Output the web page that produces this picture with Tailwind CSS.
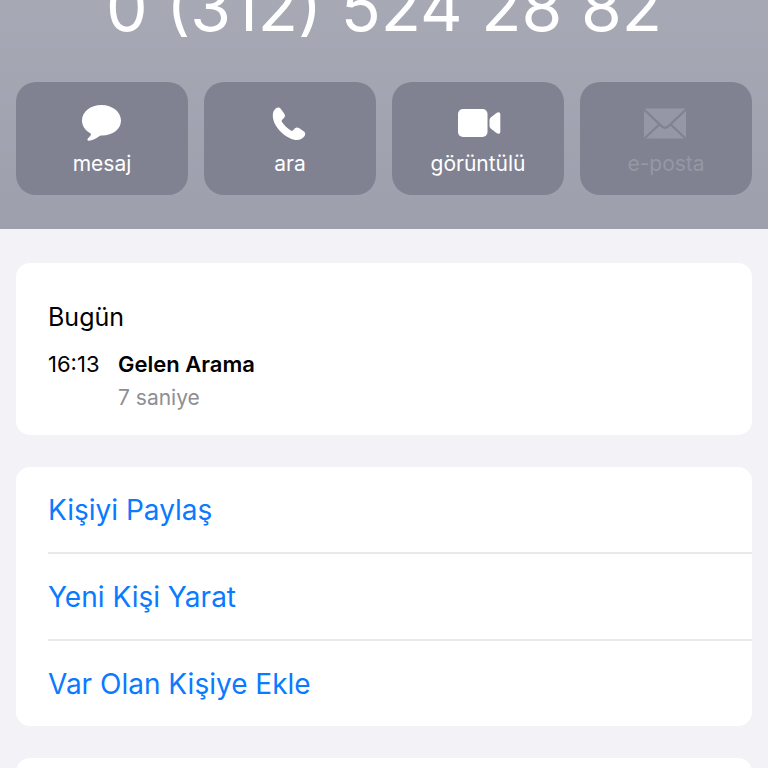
<!DOCTYPE html>
<html lang="tr">
<head>
<meta charset="utf-8">
<meta name="viewport" content="width=device-width, initial-scale=1">
<title>0 (312) 524 28 82</title>
<script src="https://cdn.jsdelivr.net/npm/@tailwindcss/browser@4"></script>
</head>
<body class="h-screen overflow-hidden bg-[#f2f2f7] font-['Inter',sans-serif] text-black">
<header class="bg-linear-to-b from-[#a8aab6] to-[#9e9fac] px-4 pb-[34px]">
  <h1 class="-mt-[33px] mb-[35px] text-center text-[66px] leading-[80px] whitespace-nowrap text-white">0 (312) 524 28 82</h1>
  <nav class="grid grid-cols-4 gap-4 text-[21px] leading-6 text-white">
    <button class="flex flex-col items-center gap-2 rounded-[20px] bg-[#808292] pt-5 pb-[19px]">
      <svg class="h-[42px] w-12" viewBox="0 0 48 42" fill="currentColor" aria-hidden="true"><path d="M23.500 3C12.500 3 4 9.800 4 18.500c0 5.300 3 9.900 8.300 12.700.9.500 1 1 .5 1.800-.7 1.200-1.700 2.100-2.700 3.200-1.300 1.400-.8 2.600 1 2.500 4.300-.4 7.600-2.500 10.500-4.600.8-.4 1.300-.5 2.400-.5C34.800 33.400 43 27 43 18.500S34.500 3 23.500 3Z"/></svg>
      <span>mesaj</span>
    </button>
    <button class="flex flex-col items-center gap-2 rounded-[20px] bg-[#808292] pt-5 pb-[19px]">
      <svg class="h-[42px] w-12" viewBox="1 0 48 42" fill="currentColor" aria-hidden="true"><path d="M10.700 6.600c1.600-1.400 3.700-1.500 5 .2l3.600 5c1.100 1.600.9 3-.4 4.300l-1.600 1.700c-.8.800-.8 1.400-.3 2.300 1.800 3 5.700 6.700 8.800 8.400.9.500 1.600.4 2.300-.3l1.600-1.600c1.300-1.300 2.800-1.500 4.300-.5l5 3.400c1.600 1.200 1.600 3 .4 4.700-2.300 3.300-6.300 4.500-11 3.200C18.300 34.600 7.800 23.600 7.800 13.400c0-2.800.9-5 2.900-6.800Z"/></svg>
      <span>ara</span>
    </button>
    <button class="flex flex-col items-center gap-2 rounded-[20px] bg-[#808292] pt-5 pb-[19px]">
      <svg class="h-[42px] w-12" viewBox="0 0 48 42" fill="currentColor" aria-hidden="true"><rect x="4" y="7" width="29.500" height="28" rx="5"/><path d="M35.500 18.500c0-1.400.4-2.300 1.500-3.300l5.500-4.300c1.800-1.400 3.800-.8 3.800 1.300v17.600c0 2.100-2 2.700-3.800 1.300L37 26.800c-1.100-1-1.500-1.900-1.500-3.300Z"/></svg>
      <span>görüntülü</span>
    </button>
    <button disabled class="flex flex-col items-center gap-2 rounded-[20px] bg-[#808292] pt-5 pb-[19px] text-[#9597a4]">
      <svg class="h-[42px] w-12" viewBox="1 0 48 42" aria-hidden="true"><rect x="3" y="6.500" width="42" height="30" rx="2" fill="currentColor"/><path d="m3 7.500 17.800 16.900c2.300 2 4.100 2 6.400 0L45 7.500M4 36l14.800-14M44 36 29.200 22" fill="none" stroke="#808292" stroke-width="2.200"/></svg>
      <span>e-posta</span>
    </button>
  </nav>
</header>
<main class="flex flex-col gap-8 px-4 pt-[34px]">
  <section class="rounded-[14px] bg-white px-8 pt-[39px] pb-5">
    <h2 class="text-[25px] leading-[30px]">Bugün</h2>
    <div class="mt-[15px] grid grid-cols-[70px_1fr] text-[22px] leading-[34px]">
      <time>16:13</time>
      <p class="font-semibold">Gelen Arama</p>
      <p class="col-start-2 text-[21px] text-[#8e8e93]">7 saniye</p>
    </div>
  </section>
  <section class="rounded-[14px] bg-white pl-8 text-[28px] leading-10 text-[#0a7aff]">
    <button class="block w-full border-b-2 border-[#e9e9eb] pt-[23px] pb-[22px] text-left">Kişiyi Paylaş</button>
    <button class="block w-full border-b-2 border-[#e9e9eb] pt-[23px] pb-[22px] text-left">Yeni Kişi Yarat</button>
    <button class="block w-full pt-[23px] pb-[22px] text-left">Var Olan Kişiye Ekle</button>
  </section>
  <section class="h-24 rounded-[14px] bg-white"></section>
</main>
</body>
</html>
